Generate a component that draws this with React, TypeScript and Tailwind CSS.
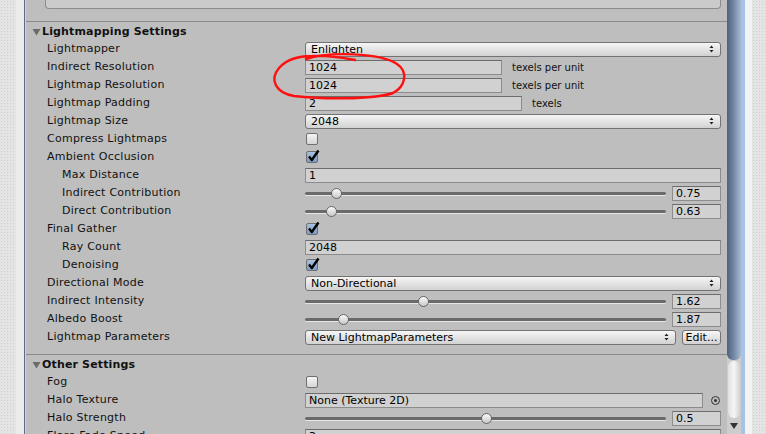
import React from "react";

type Row =
  | { label: string; indent?: boolean; kind: "popup"; value: string; edit?: boolean }
  | { label: string; indent?: boolean; kind: "field"; value: string; width?: string; suffix?: string }
  | { label: string; indent?: boolean; kind: "check"; checked: boolean }
  | { label: string; indent?: boolean; kind: "slider"; pos: number; value: string }
  | { label: string; indent?: boolean; kind: "object"; value: string };

const lightmapping: Row[] = [
  { label: "Lightmapper", kind: "popup", value: "Enlighten" },
  { label: "Indirect Resolution", kind: "field", value: "1024", width: "w-[197px]", suffix: "texels per unit" },
  { label: "Lightmap Resolution", kind: "field", value: "1024", width: "w-[197px]", suffix: "texels per unit" },
  { label: "Lightmap Padding", kind: "field", value: "2", width: "w-[217px]", suffix: "texels" },
  { label: "Lightmap Size", kind: "popup", value: "2048" },
  { label: "Compress Lightmaps", kind: "check", checked: false },
  { label: "Ambient Occlusion", kind: "check", checked: true },
  { label: "Max Distance", indent: true, kind: "field", value: "1" },
  { label: "Indirect Contribution", indent: true, kind: "slider", pos: 31, value: "0.75" },
  { label: "Direct Contribution", indent: true, kind: "slider", pos: 26, value: "0.63" },
  { label: "Final Gather", kind: "check", checked: true },
  { label: "Ray Count", indent: true, kind: "field", value: "2048" },
  { label: "Denoising", indent: true, kind: "check", checked: true },
  { label: "Directional Mode", kind: "popup", value: "Non-Directional" },
  { label: "Indirect Intensity", kind: "slider", pos: 118, value: "1.62" },
  { label: "Albedo Boost", kind: "slider", pos: 38, value: "1.87" },
  { label: "Lightmap Parameters", kind: "popup", value: "New LightmapParameters", edit: true },
];

const other: Row[] = [
  { label: "Fog", kind: "check", checked: false },
  { label: "Halo Texture", kind: "object", value: "None (Texture 2D)" },
  { label: "Halo Strength", kind: "slider", pos: 181, value: "0.5" },
  { label: "Flare Fade Speed", kind: "field", value: "3" },
];

const field = "h-[15px] border border-[#8c8c8c] border-t-[#6c6c6c] bg-[#d1d1d1] pl-[3px] leading-[13px] text-black";
const button = "h-[15px] rounded-[3px] border border-[#737373] bg-gradient-to-b from-[#f6f6f6] to-[#d2d2d2] leading-[13px] text-black";

function PopupArrows() {
  return (
    <svg width="5" height="8" viewBox="0 0 5 8" className="shrink-0">
      <path d="M0.5 3 L2.5 0.5 L4.5 3 Z M0.5 5 L2.5 7.5 L4.5 5 Z" fill="#222" />
    </svg>
  );
}

function Checkbox({ checked }: { checked: boolean }) {
  return (
    <div
      className={
        "relative ml-[1px] h-[12px] w-[12px] rounded-[2px] border border-[#6f6f6f] " +
        (checked ? "bg-gradient-to-b from-[#a9c0de] to-[#7c9cc6]" : "bg-gradient-to-b from-[#f4f4f4] to-[#d6d6d6]")
      }
    >
      {checked && (
        <svg width="13" height="13" viewBox="0 0 13 13" className="absolute -top-[3px] left-[0px]">
          <path d="M2 7.5 L4.8 11 L11.5 1.5" fill="none" stroke="#000" strokeWidth="2.4" strokeLinejoin="round" />
        </svg>
      )}
    </div>
  );
}

function Slider({ pos, value }: { pos: number; value: string }) {
  return (
    <div className="flex w-full items-center gap-[6px]">
      <div className="relative h-[15px] flex-1">
        <div className="absolute left-0 right-0 top-[6px] h-[3px] rounded-full bg-[#6a6a6a] shadow-[0_1px_0_#e6e6e6]" />
        <div
          className="absolute top-[2px] h-[11px] w-[11px] rounded-full border border-[#666] bg-gradient-to-b from-[#fafafa] to-[#c9c9c9]"
          style={{ left: pos - 5 }}
        />
      </div>
      <div className={field + " w-[49px]"}>{value}</div>
    </div>
  );
}

function Control({ row }: { row: Row }) {
  switch (row.kind) {
    case "popup":
      return (
        <div className="flex w-full gap-[6px]">
          <div className={button + " flex flex-1 items-center justify-between pl-[5px] pr-[6px]"}>
            <span>{row.value}</span>
            <PopupArrows />
          </div>
          {row.edit && <div className={button + " w-[39px] text-center"}>Edit...</div>}
        </div>
      );
    case "field":
      return (
        <div className="flex w-full items-center">
          <div className={field + " " + (row.width ?? "flex-1")}>{row.value}</div>
          {row.suffix && <span className="ml-[10px] text-[10px]">{row.suffix}</span>}
        </div>
      );
    case "check":
      return <Checkbox checked={row.checked} />;
    case "slider":
      return <Slider pos={row.pos} value={row.value} />;
    case "object":
      return (
        <div className="flex w-full items-center">
          <div className={field + " flex-1"}>{row.value}</div>
          <div className="flex w-[18px] justify-end pr-[1px]">
            <div className="flex h-[9px] w-[9px] items-center justify-center rounded-full border border-[#333]">
              <div className="h-[3px] w-[3px] rounded-full bg-[#333]" />
            </div>
          </div>
        </div>
      );
  }
}

function Section({ title, rows }: { title: string; rows: Row[] }) {
  return (
    <div>
      <div className="flex h-[16px] items-center pl-[6px]">
        <svg width="9" height="8" viewBox="0 0 9 8" className="mr-[1px]">
          <path d="M0.5 1 L8.5 1 L4.5 7.5 Z" fill="#6b6b6b" />
        </svg>
        <span className="font-bold tracking-[0.15px] text-[#111]">{title}</span>
      </div>
      {rows.map((row) => (
        <div key={row.label} className="flex h-[18px] items-center">
          <div className={"w-[279px] shrink-0 tracking-[0.25px] " + (row.indent ? "pl-[36px]" : "pl-[21px]")}>
            {row.label}
          </div>
          <div className="flex flex-1 items-center pr-[6px]">
            <Control row={row} />
          </div>
        </div>
      ))}
    </div>
  );
}

export default function App() {
  const texture =
    "bg-[#e4e4e4] bg-[radial-gradient(#cfcfcf_0.7px,transparent_0.8px)] bg-[length:3px_3px]";
  return (
    <div
      className="relative flex h-[434px] w-[766px] overflow-hidden text-[11px] text-[#111]"
      style={{ fontFamily: '"DejaVu Sans", Verdana, sans-serif' }}
    >
      <div className={"w-[16px] shrink-0 " + texture} />
      <div className="w-[8px] shrink-0 bg-[#ececec]" />
      <div className="w-[1px] shrink-0 bg-[#5b6d88]" />
      <div className="w-[1px] shrink-0 bg-[#c9d3e0]" />

      <div className="w-[701px] shrink-0 bg-[#bebebe]">
        <div className="h-[21px] border-b border-[#8a8a8a] box-content">
          <div className="ml-[19px] mr-[6px] h-[9px] rounded-b-[4px] border-x border-b border-[#8c8c8c] bg-[#cbcbcb]" />
        </div>
        <div className="pt-[2px]">
          <Section title="Lightmapping Settings" rows={lightmapping} />
        </div>
        <div className="mt-[8px] border-t border-[#8a8a8a] pt-[2px]">
          <Section title="Other Settings" rows={other} />
        </div>
      </div>

      <div className="flex w-[14px] shrink-0 flex-col bg-[#cdcdcd]">
        <div className="h-[360px] rounded-b-[6px] bg-gradient-to-r from-[#4f617e] via-[#7589a8] to-[#a8bad2]" />
        <div className="mx-[1px] mt-[1px] h-[57px] rounded-[6px] bg-gradient-to-r from-[#e0e0e0] via-[#f6f6f6] to-[#d2d2d2]" />
        <div className="flex flex-1 items-center justify-center">
          <svg width="8" height="6" viewBox="0 0 8 6">
            <path d="M0 0 L8 0 L4 6 Z" fill="#333" />
          </svg>
        </div>
      </div>
      <div className="w-[4px] shrink-0 bg-[#a6c2e6]" />
      <div className="w-[7px] shrink-0 bg-[#f2f2f2]" />
      <div className={"flex-1 " + texture} />

      <svg width="766" height="434" className="pointer-events-none absolute left-0 top-0">
        <path
          d="M306 59 C 330 51, 380 53, 397 64 C 409 72, 405 87, 393 93 C 372 100, 320 99, 294 96 C 276 93, 269 80, 279 68 C 287 59, 300 56, 312 56 C 330 55, 344 58, 355 60"
          fill="none"
          stroke="#ff1010"
          strokeWidth="2.4"
          strokeLinecap="round"
        />
      </svg>
    </div>
  );
}
